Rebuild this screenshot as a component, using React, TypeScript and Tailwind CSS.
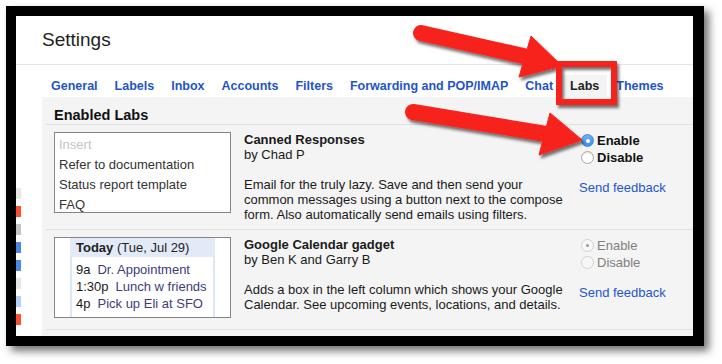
import React from 'react';

const TABS = ['General', 'Labels', 'Inbox', 'Accounts', 'Filters', 'Forwarding and POP/IMAP', 'Chat', 'Labs', 'Themes'];

// left nav colour chips peeking out behind the settings panel
const CHIPS = ['#e6e6e6', '#fc4f2f', '#c4c4c4', '#4a86e8', '#4a86e8', '#e6e6e6', '#b3cefb', '#fc4f2f'];

function Radio({ checked, disabled }: { checked?: boolean; disabled?: boolean }) {
  if (disabled) {
    return (
      <span className="flex w-[13px] h-[13px] shrink-0 items-center justify-center rounded-full border border-[#d2d2d2] bg-[#f7f7f7]">
        {checked && <span className="w-[3px] h-[3px] rounded-full bg-[#9a9a9a]" />}
      </span>
    );
  }
  if (checked) {
    return (
      <span className="flex w-[13px] h-[13px] shrink-0 items-center justify-center rounded-full border border-[#3a87e0] bg-gradient-to-b from-[#6cb0f7] to-[#3d8eea]">
        <span className="w-[4px] h-[4px] rounded-full bg-white" />
      </span>
    );
  }
  return (
    <span className="w-[13px] h-[13px] shrink-0 rounded-full border border-[#a9a9a9] bg-white shadow-[inset_0_1px_1px_rgba(0,0,0,0.12)]" />
  );
}

function RadioColumn({ disabled }: { disabled?: boolean }) {
  const label = disabled ? 'font-normal text-[#7f7f7f]' : 'font-bold text-[#111]';
  return (
    <div className="flex flex-col">
      <div className="flex h-[17px] items-center gap-[3px] pl-[2px]">
        <Radio checked disabled={disabled} />
        <span className={label}>Enable</span>
      </div>
      <div className="flex h-[17px] items-center gap-[3px] pl-[2px]">
        <Radio disabled={disabled} />
        <span className={label}>Disable</span>
      </div>
      <a className="mt-[14px] leading-[15px] text-[#2356d0]">Send feedback</a>
    </div>
  );
}

function CannedPreview() {
  return (
    <div className="w-[177px] h-[81px] shrink-0 border border-[#858585] bg-white pl-[4px] pt-[2px] leading-[20px] text-[#333]">
      <div className="text-[#c4c4c4]">Insert</div>
      <div>Refer to documentation</div>
      <div>Status report template</div>
      <div>FAQ</div>
    </div>
  );
}

function CalendarPreview() {
  const events = [
    ['9a', 'Dr. Appointment'],
    ['1:30p', 'Lunch w friends'],
    ['4p', 'Pick up Eli at SFO'],
  ];
  return (
    <div className="w-[177px] h-[81px] shrink-0 overflow-hidden border border-[#858585] bg-white px-[15px]">
      <div className="flex h-full flex-col">
        <div className="flex h-[19px] items-center bg-[#e2eaf8] pl-[6px] text-[#222]">
          <b>Today</b>&nbsp;(Tue, Jul 29)
        </div>
        <div className="flex-1 border-x-[2px] border-[#dbe6f7] pl-[4px] pt-[4px] leading-[17px]">
          {events.map(([t, e]) => (
            <div key={t} className="whitespace-nowrap">
              <span className="text-[#1a1a1a]">{t}</span>
              <span className="ml-[7px] text-[#3d3d7c]">{e}</span>
            </div>
          ))}
        </div>
      </div>
    </div>
  );
}

function LabRow({
  preview,
  title,
  author,
  lines,
  disabled,
  height,
}: {
  preview: React.ReactNode;
  title: string;
  author: string;
  lines: string[];
  disabled?: boolean;
  height: string;
}) {
  return (
    <div className={`flex items-start border-b border-[#e1e1e1] pl-[8px] pt-[7px] ${height}`}>
      {preview}
      <div className="ml-[13px] w-[335px] shrink-0 whitespace-nowrap leading-[15px] text-[#1a1a1a]">
        <div className="font-bold">{title}</div>
        <div>{author}</div>
        <div className="mt-[15px]">
          {lines.map((l) => (
            <div key={l}>{l}</div>
          ))}
        </div>
      </div>
      <RadioColumn disabled={disabled} />
    </div>
  );
}

function Annotations() {
  return (
    <svg className="pointer-events-none absolute inset-0" width={722} height={364} viewBox="0 0 722 364">
      <defs>
        <filter id="shade" x="-20%" y="-20%" width="140%" height="160%">
          <feDropShadow dx="2" dy="3" stdDeviation="1.6" floodColor="#000" floodOpacity="0.55" />
        </filter>
      </defs>
      <g filter="url(#shade)" fill="#f7231d" stroke="#f7231d">
        {/* arrow to the Labs tab */}
        <line x1="421" y1="33" x2="528" y2="57" strokeWidth="16" strokeLinecap="round" />
        <polygon points="531,36 562,66 519,77" strokeWidth="1" strokeLinejoin="round" />
        {/* arrow to Enable */}
        <line x1="413" y1="112" x2="546" y2="134" strokeWidth="16" strokeLinecap="round" />
        <polygon points="550,113 582,140 539,155" strokeWidth="1" strokeLinejoin="round" />
        {/* box round the Labs tab */}
        <rect x="559" y="64" width="55" height="38" fill="none" strokeWidth="6" />
      </g>
    </svg>
  );
}

export default function App() {
  return (
    <div className="relative w-[722px] h-[364px] overflow-hidden bg-white pl-[6px] pt-[6px] font-['Liberation_Sans',Arial,sans-serif] text-[13px]">
      <div className="w-[698px] h-[340px] bg-black pl-[10px] pt-[10px] shadow-[5px_5px_8px_rgba(0,0,0,0.55)]">
        <div className="flex w-[677px] h-[320px] flex-col bg-white">
          {/* Header */}
          <div className="flex h-[49px] shrink-0 items-center border-b border-[#e5e5e5] pl-[26px] text-[19px] text-[#222]">
            Settings
          </div>

          <div className="flex flex-1">
            {/* nav chips */}
            <div className="flex w-[26px] shrink-0 flex-col gap-[7px] pt-[123px]">
              {CHIPS.map((c, i) => (
                <div key={i} className="w-[5px] h-[11px]" style={{ backgroundColor: c }} />
              ))}
            </div>

            <div className="flex flex-1 flex-col">
              {/* Tabs */}
              <div className="flex h-[32px] shrink-0 gap-px pl-px pt-[10px] text-[12.5px]">
                {TABS.map((t) => (
                  <div
                    key={t}
                    className={`flex h-[22px] items-center whitespace-nowrap px-2 font-bold ${
                      t === 'Labs' ? 'bg-[#f4f4f4] text-[#222]' : 'text-[#1f55c9]'
                    }`}
                  >
                    {t}
                  </div>
                ))}
              </div>

              {/* Labs panel */}
              <div className="flex-1 bg-[#f4f4f4] pl-[4px]">
                <div className="h-[28px] border-b border-[#e1e1e1] pl-[8px] pt-[11px] text-[14.5px] font-bold leading-[15px] text-[#111]">
                  Enabled Labs
                </div>
                <LabRow
                  height="h-[105px]"
                  preview={<CannedPreview />}
                  title="Canned Responses"
                  author="by Chad P"
                  lines={[
                    'Email for the truly lazy. Save and then send your',
                    'common messages using a button next to the compose',
                    'form. Also automatically send emails using filters.',
                  ]}
                />
                <LabRow
                  height="h-[100px]"
                  disabled
                  preview={<CalendarPreview />}
                  title="Google Calendar gadget"
                  author="by Ben K and Garry B"
                  lines={[
                    'Adds a box in the left column which shows your Google',
                    'Calendar. See upcoming events, locations, and details.',
                  ]}
                />
              </div>
            </div>
          </div>
        </div>
      </div>
      <Annotations />
    </div>
  );
}
